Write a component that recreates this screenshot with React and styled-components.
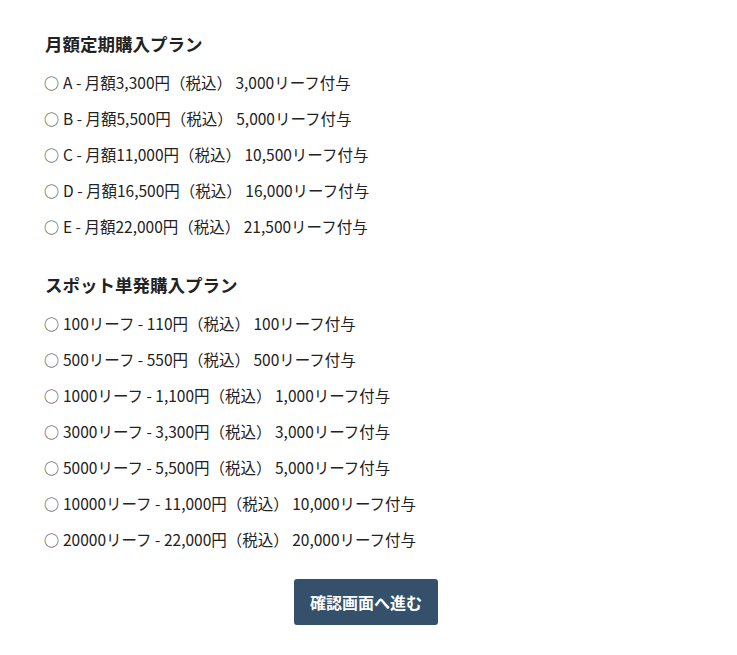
import React from 'react';
import styled, { createGlobalStyle } from 'styled-components';

const GlobalStyle = createGlobalStyle`
  body {
    margin: 0;
    background: #fff;
    font-family: "Noto Sans CJK JP", "Noto Sans", sans-serif;
    color: #222;
  }
`;

const Page = styled.div`
  padding: 31px 45px 30px;
  display: flex;
  flex-direction: column;
`;

const Section = styled.section`
  display: flex;
  flex-direction: column;
  margin-bottom: ${(p) => p.$gap || 0}px;
`;

const Heading = styled.h2`
  margin: 0 0 7px;
  font-size: 17.5px;
  line-height: 26px;
  font-weight: 700;
  color: #222;
`;

const Option = styled.label`
  display: flex;
  align-items: center;
  height: 36px;
  font-size: 15.5px;
  cursor: pointer;
`;

const Circle = styled.span`
  color: #444;
  font-size: 15px;
  margin-left: -1px;
  margin-right: 4px;
`;

const Actions = styled.div`
  display: flex;
  justify-content: center;
  padding-right: 5px;
`;

const Button = styled.button`
  width: 144px;
  height: 46px;
  border: none;
  border-radius: 3px;
  background: #34506a;
  color: #fff;
  font-family: inherit;
  font-size: 16px;
  font-weight: 700;
  cursor: pointer;
`;

const monthly = [
  'A - 月額3,300円（税込） 3,000リーフ付与',
  'B - 月額5,500円（税込） 5,000リーフ付与',
  'C - 月額11,000円（税込） 10,500リーフ付与',
  'D - 月額16,500円（税込） 16,000リーフ付与',
  'E - 月額22,000円（税込） 21,500リーフ付与',
];

const spot = [
  '100リーフ - 110円（税込） 100リーフ付与',
  '500リーフ - 550円（税込） 500リーフ付与',
  '1000リーフ - 1,100円（税込） 1,000リーフ付与',
  '3000リーフ - 3,300円（税込） 3,000リーフ付与',
  '5000リーフ - 5,500円（税込） 5,000リーフ付与',
  '10000リーフ - 11,000円（税込） 10,000リーフ付与',
  '20000リーフ - 22,000円（税込） 20,000リーフ付与',
];

const App = () => {
  return (
    <Page>
      <GlobalStyle />
      <Section $gap={28}>
        <Heading>月額定期購入プラン</Heading>
        {monthly.map((t) => (
          <Option key={t}>
            <Circle>○</Circle>
            {t}
          </Option>
        ))}
      </Section>
      <Section $gap={22}>
        <Heading>スポット単発購入プラン</Heading>
        {spot.map((t) => (
          <Option key={t}>
            <Circle>○</Circle>
            {t}
          </Option>
        ))}
      </Section>
      <Actions>
        <Button>確認画面へ進む</Button>
      </Actions>
    </Page>
  );
};

export default App;
